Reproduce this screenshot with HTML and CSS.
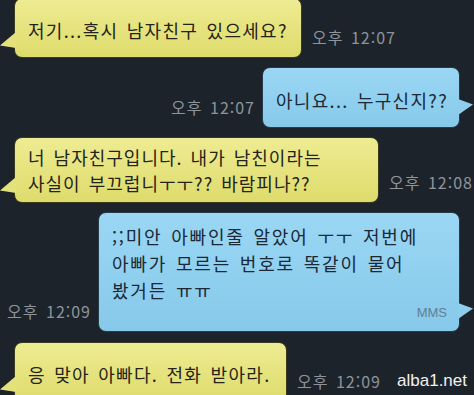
FILE: index.html
```html
<!DOCTYPE html>
<html lang="ko">
<head>
    <meta charset="UTF-8">
    <meta name="viewport" content="width=device-width, initial-scale=1.0">
    <title>대화</title>
    <link rel="stylesheet" href="styles.css">
</head>
<body>

    <div class="chat">
        <div class="row row-in">
            <div class="bubble bubble-in b1">저기...혹시 남자친구 있으세요?</div>
            <span class="time">오후 12:07</span>
        </div>

        <div class="row row-out">
            <span class="time">오후 12:07</span>
            <div class="bubble bubble-out b2">아니요... 누구신지??</div>
        </div>

        <div class="row row-in">
            <div class="bubble bubble-in b3">너 남자친구입니다. 내가 남친이라는<br>사실이 부끄럽니ㅜㅜ?? 바람피나??</div>
            <span class="time">오후 12:08</span>
        </div>

        <div class="row row-out">
            <span class="time">오후 12:09</span>
            <div class="bubble bubble-out b4">
                <div class="msg">;;미안 아빠인줄 알았어 ㅜㅜ 저번에<br>아빠가 모르는 번호로 똑같이 물어<br>봤거든 ㅠㅠ</div>
                <div class="mms">MMS</div>
            </div>
        </div>

        <div class="row row-in last">
            <div class="bubble bubble-in b5">응 맞아 아빠다. 전화 받아라.</div>
            <span class="time">오후 12:09</span>
            <span class="watermark">alba1.net</span>
        </div>
    </div>

</body>
</html>
```

FILE: styles.css
```css
body {
    margin: 0;
    background-color: #1d232a;
    font-family: "Noto Sans CJK KR", "Noto Sans", sans-serif;
    overflow: hidden;
}

.chat {
    display: flex;
    flex-direction: column;
    gap: 9px;
    margin-top: -2px;
}

.row {
    display: flex;
    align-items: flex-end;
}

.row-in {
    padding-left: 14px;
    gap: 10px;
}

.row-out {
    justify-content: flex-end;
    padding-right: 14px;
    gap: 7px;
}

.last {
    margin-top: 1px;
}

.bubble {
    position: relative;
    box-sizing: border-box;
    min-height: 60px;
    padding: 9px 13px 5px;
    display: flex;
    flex-direction: column;
    justify-content: center;
    border-radius: 8px;
    font-size: 18px;
    line-height: 26px;
    letter-spacing: 1.3px;
    word-spacing: 2px;
    white-space: nowrap;
}

.bubble-in {
    background: linear-gradient(#eeec92, #dedb6c);
    color: #25241a;
    border: 1px solid #3b3a1e;
}

.bubble-in::before {
    content: "";
    position: absolute;
    left: -15px;
    bottom: 9px;
    width: 16px;
    height: 16px;
    background-color: #e4e27c;
    clip-path: polygon(100% 0, 0 85%, 100% 100%);
}

.bubble-out {
    background: linear-gradient(#9ad7f4, #87c9ea);
    color: #1b2836;
    border: 1px solid #2a3b48;
}

.bubble-out::after {
    content: "";
    position: absolute;
    right: -14px;
    bottom: 12px;
    width: 15px;
    height: 16px;
    background-color: #8ecdec;
    clip-path: polygon(0 0, 100% 35%, 0 100%);
}

.b1 { width: 288px; }
.b2 { width: 198px; height: 61px; padding-right: 6px; }
.b3 { width: 365px; height: 66px; padding-top: 7px; padding-bottom: 7px; letter-spacing: 1px; }
.b4 { width: 362px; padding: 10px 12px 11px 13px; justify-content: flex-start; letter-spacing: 1.8px; }
.b5 { width: 273px; }

.msg {
    line-height: 27px;
}

.mms {
    margin-top: 2px;
    text-align: right;
    font-family: "Liberation Sans", sans-serif;
    font-size: 13px;
    line-height: 14px;
    letter-spacing: 0;
    word-spacing: 0;
    color: #5f7f95;
}

.time {
    margin-bottom: 12px;
    font-size: 16px;
    line-height: 18px;
    letter-spacing: 1px;
    word-spacing: 2px;
    color: #8d949c;
    white-space: nowrap;
}

.watermark {
    margin-left: auto;
    margin-right: 7px;
    margin-bottom: 12px;
    font-family: "Liberation Sans", sans-serif;
    font-size: 17px;
    line-height: 18px;
    color: #f2f2f2;
}
```
